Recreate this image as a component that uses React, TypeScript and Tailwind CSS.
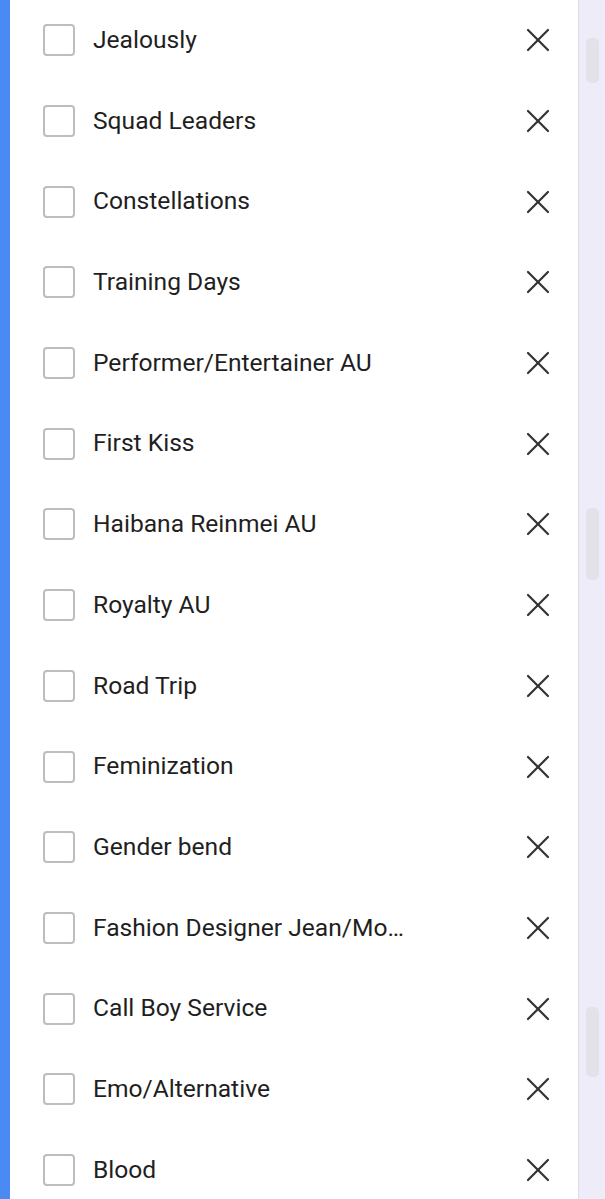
import React from "react";

const items = [
  "Jealously",
  "Squad Leaders",
  "Constellations",
  "Training Days",
  "Performer/Entertainer AU",
  "First Kiss",
  "Haibana Reinmei AU",
  "Royalty AU",
  "Road Trip",
  "Feminization",
  "Gender bend",
  "Fashion Designer Jean/Mo…",
  "Call Boy Service",
  "Emo/Alternative",
  "Blood",
];

function XIcon() {
  return (
    <svg width="24" height="24" viewBox="0 0 24 24" fill="none" stroke="#333333" strokeWidth="2.2" strokeLinecap="round">
      <path d="M2 2 L22 22" />
      <path d="M22 2 L2 22" />
    </svg>
  );
}

export default function App() {
  return (
    <div className="flex w-[605px] h-[1199px] overflow-hidden bg-white" style={{ fontFamily: "Roboto, 'Noto Sans', sans-serif" }}>
      <div className="w-[10px] shrink-0 bg-[#4a8af4]" />
      <div className="w-[568px] shrink-0 bg-white flex flex-col">
        {items.map((t) => (
          <div key={t} className="h-[80.7px] shrink-0 flex items-center pl-[33px] pr-[28px]">
            <div className="w-[32px] h-[32px] rounded-[4px] border-[2.5px] border-[#bdbdbd] shrink-0" />
            <span className="ml-[18px] flex-1 text-[24.6px] leading-none text-[#1f1f1f] whitespace-nowrap">{t}</span>
            <div className="w-[24px] h-[24px] flex items-center justify-center">
              <XIcon />
            </div>
          </div>
        ))}
      </div>
      <div className="flex-1 bg-[#edecf8] border-l border-[#dddce8] flex flex-col items-center">
        <div className="mt-[38px] w-[13px] h-[45px] rounded-[5px] bg-[#e2e2e8]" />
        <div className="mt-[425px] w-[13px] h-[72px] rounded-[5px] bg-[#e2e2e8]" />
        <div className="mt-[427px] w-[13px] h-[70px] rounded-[5px] bg-[#e2e2e8]" />
      </div>
    </div>
  );
}
